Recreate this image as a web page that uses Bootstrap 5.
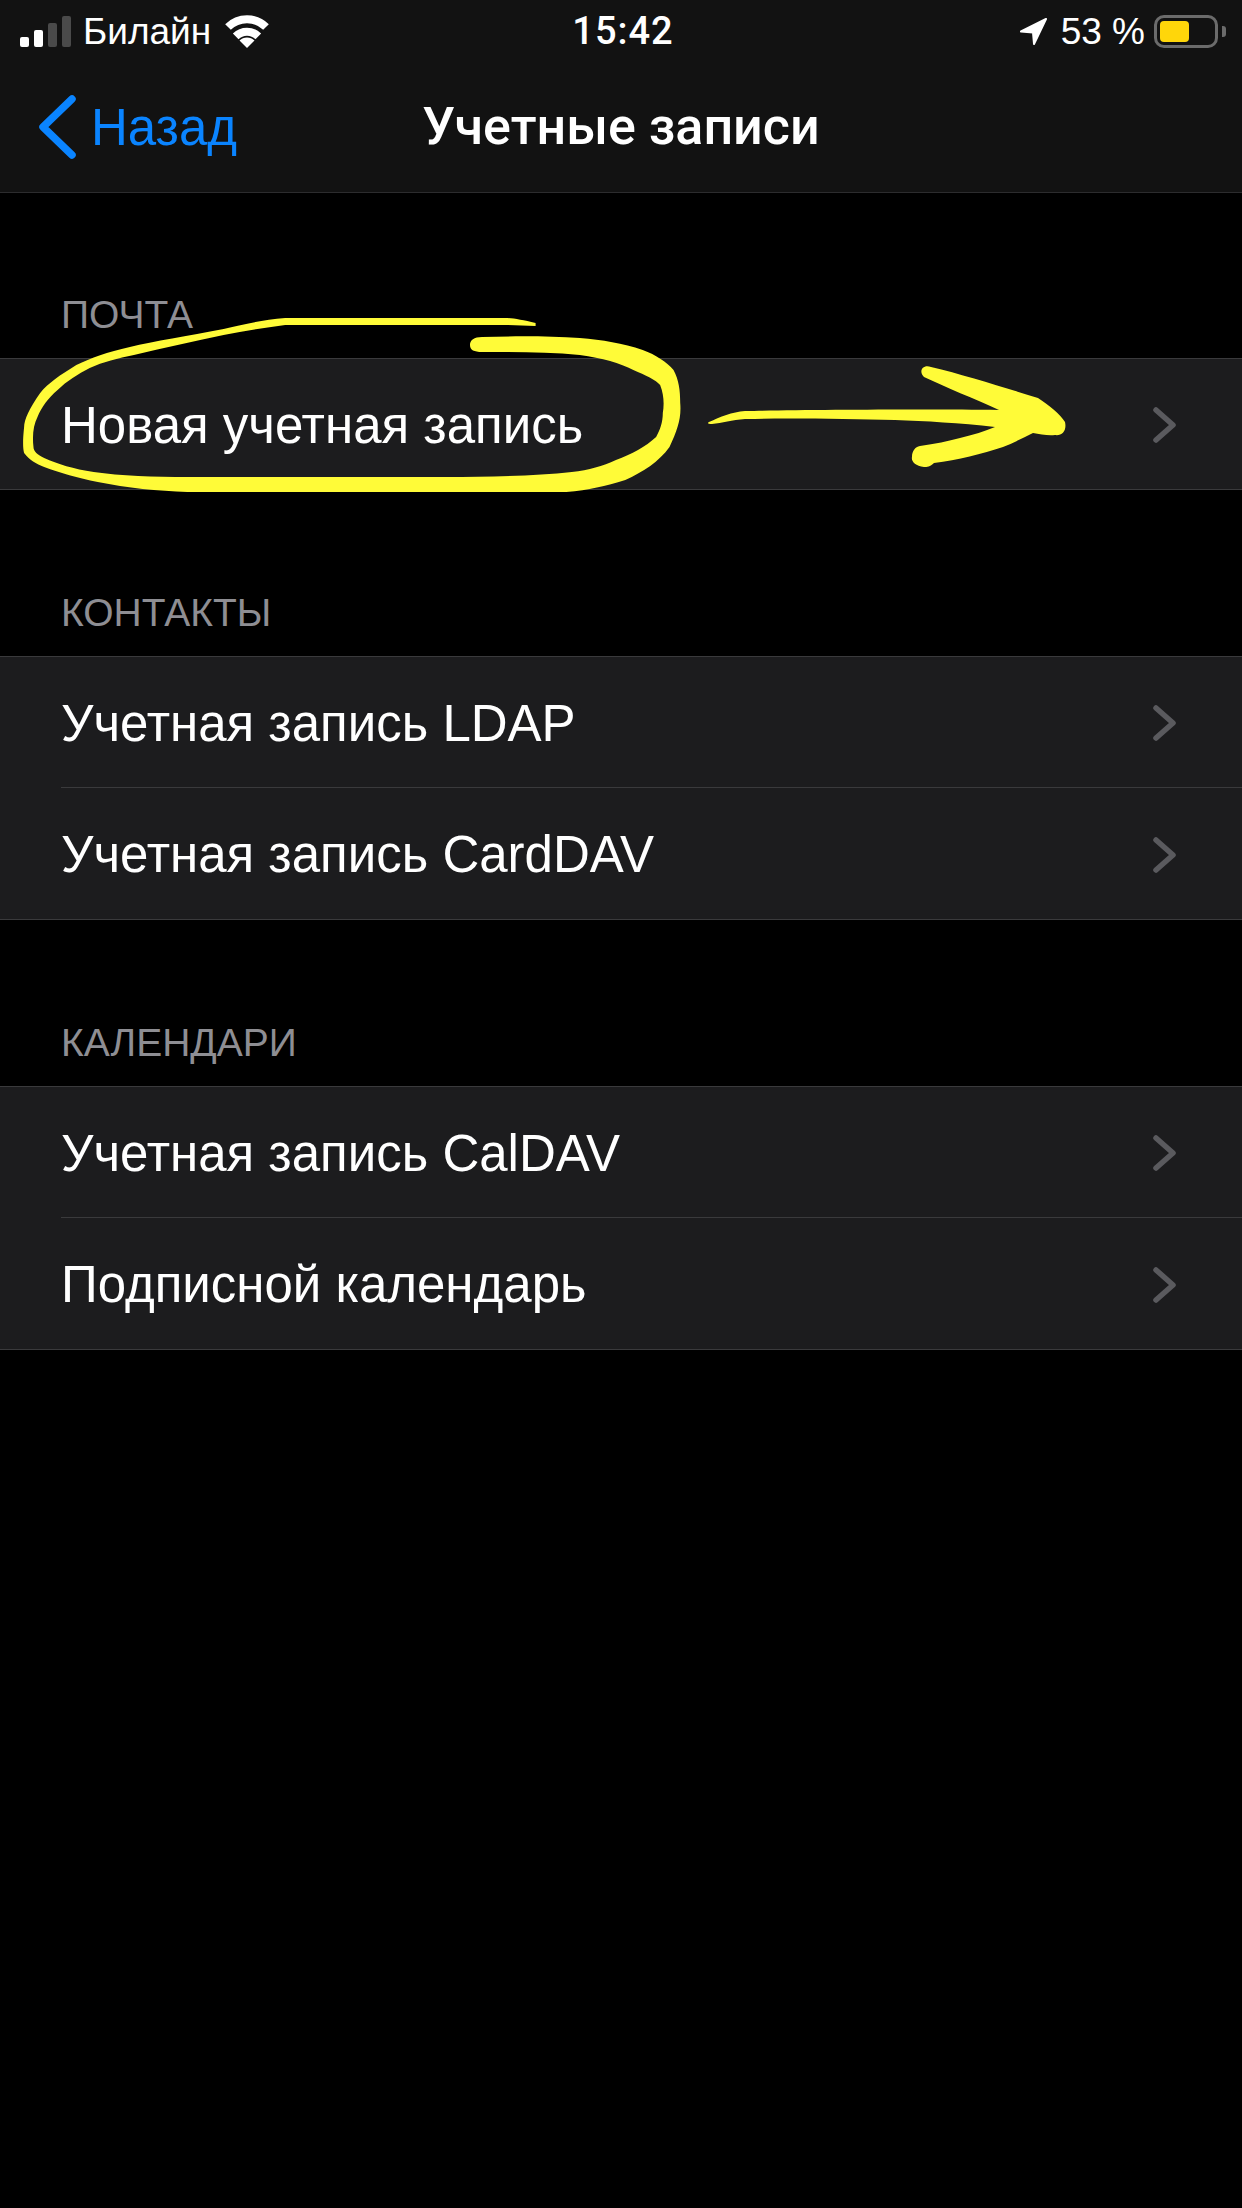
<!DOCTYPE html>
<html lang="ru">
<head>
    <meta charset="UTF-8">
    <meta name="viewport" content="width=device-width, initial-scale=1.0">
    <title>Учетные записи</title>
    <link href="https://cdn.jsdelivr.net/npm/bootstrap@5.3.0/dist/css/bootstrap.min.css" rel="stylesheet">
    <style>
        body {
            background-color: #000;
            color: #fff;
            font-family: "Liberation Sans", Arial, sans-serif;
            min-height: 2208px;
        }
        .top-area {
            background-color: #121212;
            border-bottom: 1px solid #2c2c2e;
            height: 193px;
        }
        .status-line {
            display: grid;
            grid-template-columns: 1fr auto 1fr;
            align-items: center;
            height: 60px;
            padding: 2px 16px 0 20px;
            font-size: 37px;
            line-height: 1;
        }
        .status-time {
            font-family: Roboto, "Liberation Sans", sans-serif;
            font-size: 38px;
            font-weight: 500;
            letter-spacing: 1px;
        }
        .signal {
            height: 31px;
            gap: 5px;
            margin-right: 12px;
        }
        .signal i {
            display: block;
            width: 9px;
            background-color: #fff;
            border-radius: 2px;
        }
        .signal i.off { background-color: #4a4a4a; }
        .bar-1 { height: 10px; }
        .bar-2 { height: 17px; }
        .bar-3 { height: 24px; }
        .bar-4 { height: 31px; }
        .wifi-icon { margin-left: 14px; }
        .location-icon { margin-right: 14px; }
        .battery {
            width: 64px;
            height: 33px;
            margin-left: 9px;
            padding: 3px;
            border: 3px solid #6b6b6b;
            border-radius: 10px;
        }
        .battery-level {
            width: 29px;
            height: 100%;
            background-color: #ffd60a;
            border-radius: 4px;
        }
        .battery-nub {
            width: 4px;
            height: 11px;
            margin-left: 4px;
            background-color: #6b6b6b;
            border-radius: 0 3px 3px 0;
        }
        .nav-line {
            display: grid;
            grid-template-columns: 1fr auto 1fr;
            align-items: center;
            height: 132px;
            padding-top: 2px;
            font-size: 51px;
            line-height: 1;
        }
        .back-link {
            color: #0a84ff;
            text-decoration: none;
            gap: 15px;
            margin-left: 39px;
        }
        .page-title {
            font-family: Roboto, "Liberation Sans", sans-serif;
            font-size: 52px;
            font-weight: 500;
            margin: 0;
            line-height: 1;
        }
        .section-head {
            display: flex;
            align-items: flex-end;
            height: 166px;
            padding: 0 0 24px 61px;
            color: #8e8e93;
            font-size: 39px;
            line-height: 1;
        }
        main > .section-head:first-child { height: 165px; }
        .settings-group {
            --bs-list-group-bg: #1c1c1e;
            --bs-list-group-color: #fff;
            --bs-list-group-border-width: 0;
            border-top: 1px solid #3a3a3c;
            border-bottom: 1px solid #3a3a3c;
        }
        .settings-item {
            padding: 0 0 0 61px;
        }
        .settings-line {
            height: 130px;
            padding-right: 65px;
            padding-top: 2px;
            font-size: 51px;
            line-height: 1;
        }
        .settings-item + .settings-item .settings-line {
            height: 132px;
            border-top: 1px solid #3a3a3c;
        }
        .scribble {
            position: absolute;
            top: 0;
            left: 0;
            width: 1242px;
            height: 2208px;
            pointer-events: none;
        }
    </style>
</head>
<body class="position-relative">
    <!-- Status bar and navigation -->
    <header class="top-area">
        <div class="status-line">
            <div class="d-flex align-items-center">
                <div class="signal d-flex align-items-end">
                    <i class="bar-1"></i><i class="bar-2"></i><i class="bar-3 off"></i><i class="bar-4 off"></i>
                </div>
                <span>Билайн</span>
                <svg class="wifi-icon" width="44" height="33" viewBox="0 0 44 33">
                    <path d="M3 12A27 27 0 0 1 41 12M10.700 21.300A16 16 0 0 1 33.300 21.300" fill="none" stroke="#fff" stroke-width="8"/>
                    <path d="M22 33L14.500 25.500A10.600 10.600 0 0 1 29.500 25.500Z" fill="#fff"/>
                </svg>
            </div>
            <div class="status-time">15:42</div>
            <div class="d-flex align-items-center justify-content-end">
                <svg class="location-icon" width="27" height="27" viewBox="0 0 27 27">
                    <path d="M26 1L1 13.500L13 14.500L14 26Z" fill="#fff" stroke="#fff" stroke-width="2" stroke-linejoin="round"/>
                </svg>
                <span>53 %</span>
                <div class="battery"><div class="battery-level"></div></div>
                <div class="battery-nub"></div>
            </div>
        </div>
        <nav class="nav-line">
            <a class="back-link d-flex align-items-center" href="#">
                <svg width="37" height="64" viewBox="0 0 37 64">
                    <path d="M33 4L4 32L33 60" fill="none" stroke="#0a84ff" stroke-width="7.500" stroke-linecap="round" stroke-linejoin="round"/>
                </svg>
                <span>Назад</span>
            </a>
            <h1 class="page-title">Учетные записи</h1>
        </nav>
    </header>

    <main>
        <div class="section-head">ПОЧТА</div>
        <ul class="list-group list-group-flush settings-group">
            <li class="list-group-item settings-item">
                <div class="settings-line d-flex align-items-center justify-content-between">
                    <span>Новая учетная запись</span>
                    <svg width="24" height="36" viewBox="0 0 24 36"><path d="M3 3L20 18L3 33" fill="none" stroke="#5a5a5e" stroke-width="5.500" stroke-linecap="round" stroke-linejoin="round"/></svg>
                </div>
            </li>
        </ul>

        <div class="section-head">КОНТАКТЫ</div>
        <ul class="list-group list-group-flush settings-group">
            <li class="list-group-item settings-item">
                <div class="settings-line d-flex align-items-center justify-content-between">
                    <span>Учетная запись LDAP</span>
                    <svg width="24" height="36" viewBox="0 0 24 36"><path d="M3 3L20 18L3 33" fill="none" stroke="#5a5a5e" stroke-width="5.500" stroke-linecap="round" stroke-linejoin="round"/></svg>
                </div>
            </li>
            <li class="list-group-item settings-item">
                <div class="settings-line d-flex align-items-center justify-content-between">
                    <span>Учетная запись CardDAV</span>
                    <svg width="24" height="36" viewBox="0 0 24 36"><path d="M3 3L20 18L3 33" fill="none" stroke="#5a5a5e" stroke-width="5.500" stroke-linecap="round" stroke-linejoin="round"/></svg>
                </div>
            </li>
        </ul>

        <div class="section-head">КАЛЕНДАРИ</div>
        <ul class="list-group list-group-flush settings-group">
            <li class="list-group-item settings-item">
                <div class="settings-line d-flex align-items-center justify-content-between">
                    <span>Учетная запись CalDAV</span>
                    <svg width="24" height="36" viewBox="0 0 24 36"><path d="M3 3L20 18L3 33" fill="none" stroke="#5a5a5e" stroke-width="5.500" stroke-linecap="round" stroke-linejoin="round"/></svg>
                </div>
            </li>
            <li class="list-group-item settings-item">
                <div class="settings-line d-flex align-items-center justify-content-between">
                    <span>Подписной календарь</span>
                    <svg width="24" height="36" viewBox="0 0 24 36"><path d="M3 3L20 18L3 33" fill="none" stroke="#5a5a5e" stroke-width="5.500" stroke-linecap="round" stroke-linejoin="round"/></svg>
                </div>
            </li>
        </ul>
    </main>

    <!-- Yellow marker drawn over the screenshot -->
    <svg class="scribble" viewBox="0 0 1242 2208">
        <path fill="#fffb38" transform="scale(1.339 1)" d="M400 323C390 320 383 318 377 318L213 318C195 320 180 325 167 329C140 336 115 341 97 347C80 352 68 358 57 365C45 375 36 383 30 393C22 408 18 420 18 427C17 440 17 448 18 453C22 460 27 464 33 467C45 473 58 478 73 482C95 488 118 491 140 492L423 492C440 490 452 486 467 480C480 472 492 462 500 447C506 430 509 418 508 403C508 390 507 380 503 370C498 362 490 355 480 350C465 343 450 340 433 338C410 336 385 336 360 337C354 337 351 340 351 345C351 350 354 352 360 352C385 352 410 352 433 355C450 358 463 363 473 370C482 375 490 380 493 385C496 395 496 405 495 413C495 422 493 430 490 437C482 447 472 454 460 460C450 466 440 470 427 472C400 476 365 477 333 477L140 477C115 477 90 476 70 472C55 469 43 464 33 458C28 455 25 451 25 447C24 435 25 425 28 417C31 407 36 398 43 390C50 381 58 374 67 368C77 362 88 358 100 355C122 348 145 341 167 335C182 331 197 328 213 325L377 325C385 325 392 326 400 326Z"/>
        <path fill="#fffb38" d="M709 422C720 417 732 412 745 411C800 410 920 409 999 410C975 399 945 387 924 377C918 371 923 364 931 367C965 375 1005 388 1038 398C1050 406 1060 414 1065 422C1067 431 1062 436 1055 435C1048 436 1040 434 1033 433C1023 438 1013 443 1003 447C982 454 958 460 934 463C930 467 927 467 924 467C915 466 911 461 912 457C912 451 915 447 920 446C935 444 948 441 960 438C973 435 985 431 995 427C960 423 925 421 895 420C850 419 790 418 745 419C732 420 722 423 712 424C708 424 707 423 709 422Z"/>
    </svg>

    <script src="https://cdn.jsdelivr.net/npm/bootstrap@5.3.0/dist/js/bootstrap.bundle.min.js"></script>
</body>
</html>
